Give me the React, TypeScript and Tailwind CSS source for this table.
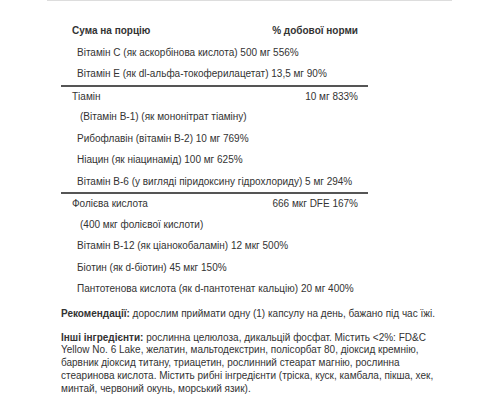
const MAIN_ROWS_A = [
  "Вітамін C (як аскорбінова кислота) 500 мг 556%",
  "Вітамін E (як dl-альфа-токоферилацетат) 13,5 мг 90%",
];

const B_ROWS = [
  "Рибофлавін (вітамін B-2) 10 мг 769%",
  "Ніацин (як ніацинамід) 100 мг 625%",
  "Вітамін B-6 (у вигляді піридоксину гідрохлориду) 5 мг 294%",
];

const FOLATE_ROWS = [
  "Вітамін B-12 (як ціанокобаламін) 12 мкг 500%",
  "Біотин (як d-біотин) 45 мкг 150%",
  "Пантотенова кислота (як d-пантотенат кальцію) 20 мг 400%",
];

function Row({ children, bordered }: { children: React.ReactNode; bordered?: boolean }) {
  return (
    <div
      className={`flex h-[21.5px] items-center justify-between whitespace-nowrap pl-[11px] pr-[10px] ${
        bordered ? "border-t-2 border-[#555]" : ""
      }`}
    >
      {children}
    </div>
  );
}

function SubRow({ text, extra }: { text: string; extra?: boolean }) {
  return (
    <div
      className={`flex h-[21.5px] items-center whitespace-nowrap ${
        extra ? "pl-[19px]" : "pl-[16px]"
      }`}
    >
      {text}
    </div>
  );
}

export default function App() {
  return (
    <div
      className="min-h-[400px] bg-white text-[10px] text-[#333]"
      style={{ fontFamily: '"Liberation Sans", Arial, sans-serif' }}
    >
      <div className="mx-[47px] w-[405px] border-t border-[#ddd] pt-[19px]">
        <div className="ml-[14px] w-[307px]">
          {/* Table */}
          <Row>
            <span className="font-bold">Сума на порцію</span>
            <span className="font-bold">% добової норми</span>
          </Row>
          {MAIN_ROWS_A.map((t) => (
            <SubRow key={t} text={t} />
          ))}

          <Row bordered>
            <span>Тіамін</span>
            <span>10 мг 833%</span>
          </Row>
          <SubRow text="(Вітамін B-1) (як мононітрат тіаміну)" extra />
          {B_ROWS.map((t) => (
            <SubRow key={t} text={t} />
          ))}

          <Row bordered>
            <span>Фолієва кислота</span>
            <span>666 мкг DFE 167%</span>
          </Row>
          <SubRow text="(400 мкг фолієвої кислоти)" extra />
          {FOLATE_ROWS.map((t) => (
            <SubRow key={t} text={t} />
          ))}
        </div>

        {/* Notes */}
        <div className="ml-[14px] w-[385px]">
          <p className="mt-[7px] leading-[13px]">
            <span className="font-bold">Рекомендації:</span> дорослим приймати одну (1) капсулу на
            день, бажано під час їжі.
          </p>
          <p className="mt-[12px] leading-[12.8px]">
            <span className="font-bold">Інші інгредієнти:</span> рослинна целюлоза, дикальцій фосфат.
            Містить &lt;2%: FD&amp;C Yellow No. 6 Lake, желатин, мальтодекстрин, полісорбат 80,
            діоксид кремнію, барвник діоксид титану, триацетин, рослинний стеарат магнію, рослинна
            стеаринова кислота. Містить рибні інгредієнти (тріска, куск, камбала, пікша, хек, минтай,
            червоний окунь, морський язик).
          </p>
        </div>
      </div>
    </div>
  );
}
